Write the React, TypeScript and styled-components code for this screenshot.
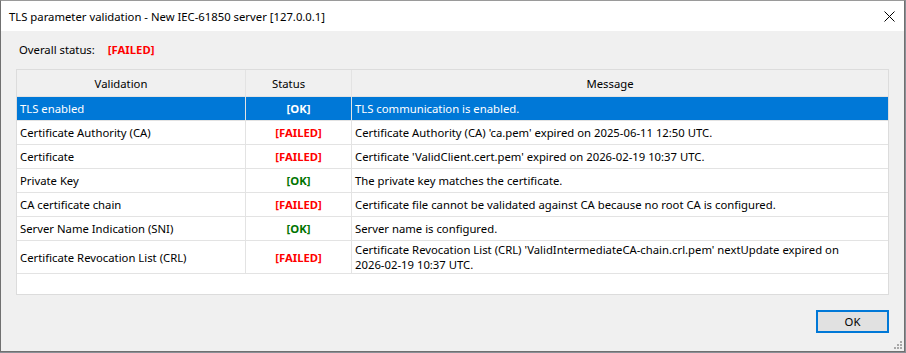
import styled, { createGlobalStyle } from "styled-components";

const GlobalStyle = createGlobalStyle`
    html, body {
        margin: 0;
        padding: 0;
        background: #8a8f96;
    }
    * {
        box-sizing: border-box;
    }
`;

const Window = styled.div`
    position: relative;
    width: 905px;
    height: 352px;
    display: flex;
    flex-direction: column;
    border: 1px solid #707070;
    border-top-color: #9a9a9a;
    background: #f0f0f0;
    font-family: "Noto Sans", "Open Sans", sans-serif;
    font-size: 11.3px;
    color: #000;
`;

const TitleBar = styled.div`
    height: 30px;
    flex-shrink: 0;
    display: flex;
    align-items: center;
    justify-content: space-between;
    padding: 0 9px 0 8px;
    background: #fff;
`;

const Title = styled.span`
    line-height: 15px;
    margin-top: 1px;
`;

const Content = styled.div`
    flex: 1;
    display: flex;
    flex-direction: column;
    padding: 11px 15px 18px 15px;
`;

const StatusLine = styled.div`
    display: flex;
    align-items: center;
    height: 15px;
    line-height: 15px;
    margin-left: 3px;
    gap: 13px;
`;

const StatusText = styled.span<{ $ok: boolean; $inverse?: boolean }>`
    font-weight: bold;
    color: ${p => (p.$inverse ? "#fff" : p.$ok ? "#007400" : "#ff0000")};
`;

const Grid = styled.div`
    margin-top: 12px;
    height: 226px;
    border: 1px solid #dcdcdc;
    background: #fff;
    display: flex;
    flex-direction: column;
`;

const Row = styled.div<{ $height: number; $selected?: boolean }>`
    display: grid;
    grid-template-columns: 229px 106px 1fr;
    height: ${p => p.$height}px;
    border-bottom: 1px solid #e3e3e3;
    background: ${p => (p.$selected ? "#0078d7" : "transparent")};
    color: ${p => (p.$selected ? "#fff" : "#000")};
`;

const HeaderRow = styled(Row)`
    background: #f0f0f0;
`;

const HeaderCell = styled.div`
    display: flex;
    align-items: center;
    justify-content: center;
    padding-right: 20px;
    border-right: 1px solid #e3e3e3;
    &:last-child {
        border-right: none;
    }
`;

const Cell = styled.div<{ $center?: boolean }>`
    display: flex;
    align-items: center;
    justify-content: ${p => (p.$center ? "center" : "flex-start")};
    padding: 0 3px;
    line-height: 15px;
    border-right: 1px solid #e3e3e3;
    &:last-child {
        border-right: none;
    }
`;

const NoWrap = styled.span`
    white-space: nowrap;
`;

const Footer = styled.div`
    margin-top: auto;
    display: flex;
    justify-content: flex-end;
`;

const OkButton = styled.button`
    width: 73px;
    height: 23px;
    border: 2px solid #0078d7;
    background: #e1e1e1;
    font-family: inherit;
    font-size: inherit;
    color: #000;
    padding: 0;
`;

const Grip = styled.svg`
    position: absolute;
    right: 1px;
    bottom: 1px;
`;

interface Check {
    name: string;
    ok: boolean;
    message: string;
}

const checks: Check[] = [
    { name: "TLS enabled", ok: true, message: "TLS communication is enabled." },
    { name: "Certificate Authority (CA)", ok: false, message: "Certificate Authority (CA) 'ca.pem' expired on 2025-06-11 12:50 UTC." },
    { name: "Certificate", ok: false, message: "Certificate 'ValidClient.cert.pem' expired on 2026-02-19 10:37 UTC." },
    { name: "Private Key", ok: true, message: "The private key matches the certificate." },
    { name: "CA certificate chain", ok: false, message: "Certificate file cannot be validated against CA because no root CA is configured." },
    { name: "Server Name Indication (SNI)", ok: true, message: "Server name is configured." },
    {
        name: "Certificate Revocation List (CRL)",
        ok: false,
        message: "Certificate Revocation List (CRL) 'ValidIntermediateCA-chain.crl.pem' nextUpdate expired on 2026-02-19 10:37 UTC.",
    },
];

// keep dates like 2026-02-19 from breaking at the hyphen
function renderMessage(msg: string) {
    return msg.split(/(\d{4}-\d{2}-\d{2})/).map((part, i) =>
        i % 2 === 1 ? <NoWrap key={i}>{part}</NoWrap> : part
    );
}

function App() {
    return (
        <>
            <GlobalStyle />
            <Window>
                <TitleBar>
                    <Title>TLS parameter validation - New IEC-61850 server [127.0.0.1]</Title>
                    <svg width="11" height="11" viewBox="0 0 11 11">
                        <path d="M0.5 0.5 L10.5 10.5 M10.5 0.5 L0.5 10.5" stroke="#000" strokeWidth="1" />
                    </svg>
                </TitleBar>
                <Content>
                    <StatusLine>
                        <span>Overall status:</span>
                        <StatusText $ok={false}>[FAILED]</StatusText>
                    </StatusLine>
                    <Grid>
                        <HeaderRow $height={27}>
                            <HeaderCell>Validation</HeaderCell>
                            <HeaderCell>Status</HeaderCell>
                            <HeaderCell>Message</HeaderCell>
                        </HeaderRow>
                        {checks.map((c, i) => (
                            <Row key={c.name} $height={i === checks.length - 1 ? 33 : 24} $selected={i === 0}>
                                <Cell>{c.name}</Cell>
                                <Cell $center>
                                    <StatusText $ok={c.ok} $inverse={i === 0}>
                                        {c.ok ? "[OK]" : "[FAILED]"}
                                    </StatusText>
                                </Cell>
                                <Cell>
                                    <span>{renderMessage(c.message)}</span>
                                </Cell>
                            </Row>
                        ))}
                    </Grid>
                    <Footer>
                        <OkButton>OK</OkButton>
                    </Footer>
                </Content>
                <Grip width="10" height="10" viewBox="0 0 10 10">
                    <rect x="7" y="1" width="2" height="2" fill="#a8a8a8" />
                    <rect x="4" y="4" width="2" height="2" fill="#a8a8a8" />
                    <rect x="7" y="4" width="2" height="2" fill="#a8a8a8" />
                    <rect x="1" y="7" width="2" height="2" fill="#a8a8a8" />
                    <rect x="4" y="7" width="2" height="2" fill="#a8a8a8" />
                    <rect x="7" y="7" width="2" height="2" fill="#a8a8a8" />
                </Grip>
            </Window>
        </>
    );
}

export default App;
